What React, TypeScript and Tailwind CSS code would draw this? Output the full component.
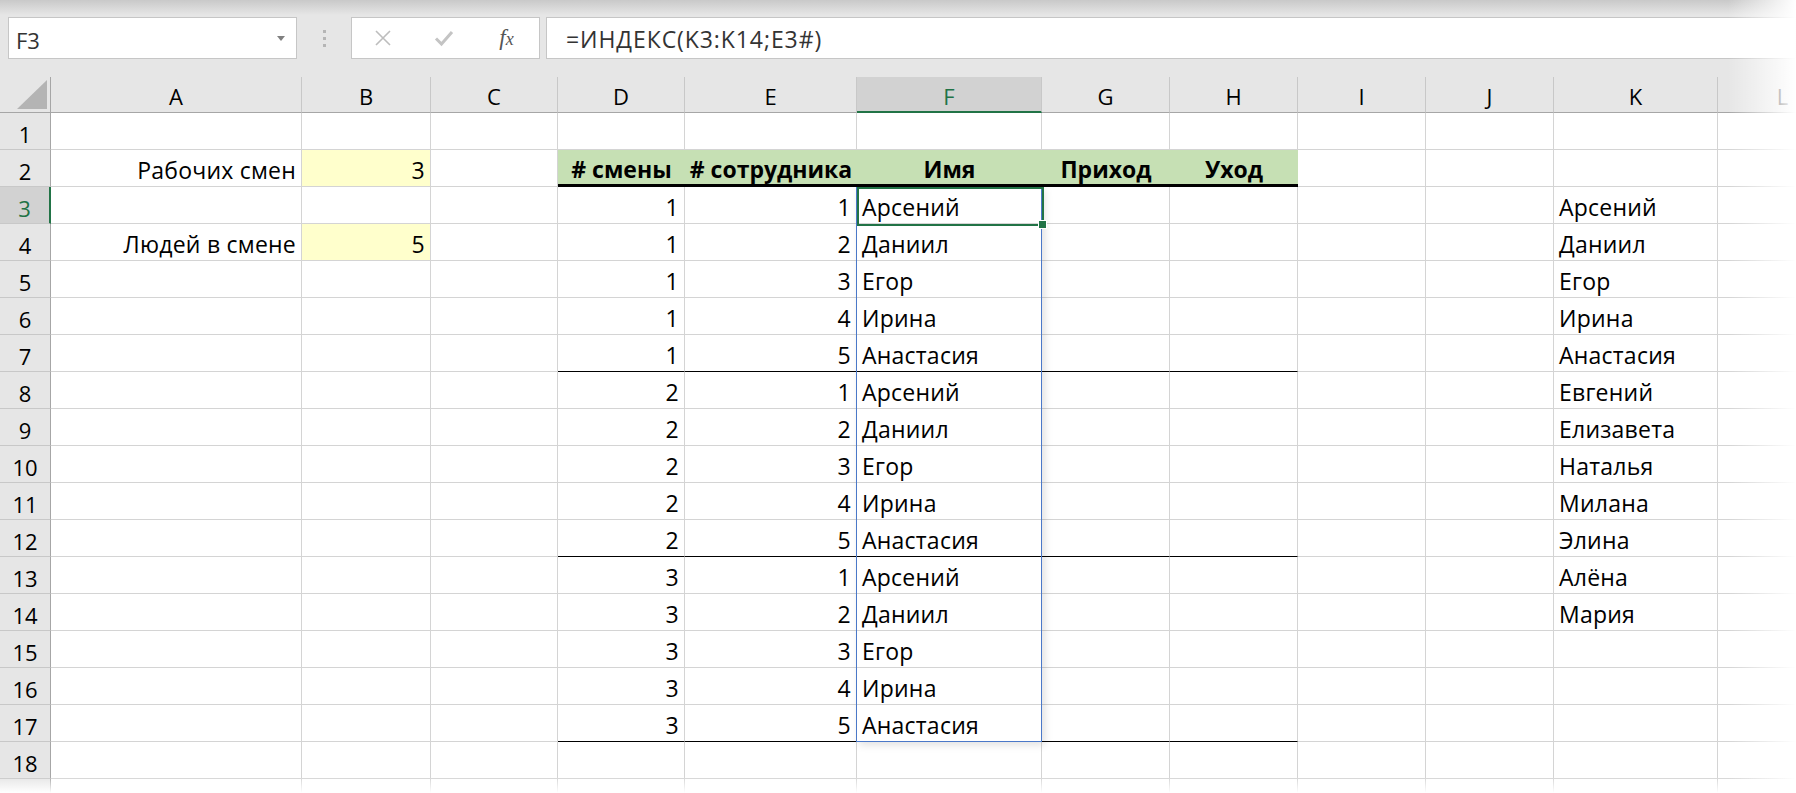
import React from "react";

const COLS = ["A", "B", "C", "D", "E", "F", "G", "H", "I", "J", "K", "L"];
const STAFF = ["Арсений", "Даниил", "Егор", "Ирина", "Анастасия"];
const LIST = [
  "Арсений",
  "Даниил",
  "Егор",
  "Ирина",
  "Анастасия",
  "Евгений",
  "Елизавета",
  "Наталья",
  "Милана",
  "Элина",
  "Алёна",
  "Мария",
];
const HEADERS = ["# смены", "# сотрудника", "Имя", "Приход", "Уход"];
const ROWS = Array.from({ length: 19 }, (_, i) => i + 1);

type Align = "left" | "right" | "center";

function cellValue(r: number, c: number): { text: string; align: Align; bold?: boolean } {
  if (r === 2 && c === 0) return { text: "Рабочих смен", align: "right" };
  if (r === 2 && c === 1) return { text: "3", align: "right" };
  if (r === 4 && c === 0) return { text: "Людей в смене", align: "right" };
  if (r === 4 && c === 1) return { text: "5", align: "right" };
  if (r === 2 && c >= 3 && c <= 7) return { text: HEADERS[c - 3], align: "center", bold: true };
  if (r >= 3 && r <= 17) {
    const i = r - 3;
    if (c === 3) return { text: String(Math.floor(i / 5) + 1), align: "right" };
    if (c === 4) return { text: String((i % 5) + 1), align: "right" };
    if (c === 5) return { text: STAFF[i % 5], align: "left" };
  }
  if (c === 10 && r >= 3 && r <= 14) return { text: LIST[r - 3], align: "left" };
  return { text: "", align: "left" };
}

function Cell({ r, c }: { r: number; c: number }) {
  const inTable = c >= 3 && c <= 7;
  const head = r === 2 && inTable;
  const groupEnd = inTable && (r === 7 || r === 12 || r === 17);
  const yellow = (r === 2 || r === 4) && c === 1;
  const v = cellValue(r, c);

  const bottom = head
    ? "border-b-[3px] border-b-black"
    : groupEnd
    ? "border-b border-b-black"
    : "border-b border-b-[#d4d4d4]";
  const right = head ? "" : "border-r border-r-[#d4d4d4]";
  const bg = head ? "bg-[#c6e0b4]" : yellow ? "bg-[#ffffcc]" : "bg-white";
  const justify =
    v.align === "right" ? "justify-end" : v.align === "center" ? "justify-center" : "justify-start";

  return (
    <div
      className={`flex items-center overflow-hidden whitespace-nowrap px-[5px] pt-[5px] text-[23px] leading-none text-black ${bottom} ${right} ${bg} ${justify} ${
        v.bold ? "font-bold" : "tracking-[0.01em]"
      }`}
    >
      {v.text}
    </div>
  );
}

function Toolbar() {
  return (
    <div className="flex h-[77px] items-start bg-[linear-gradient(to_bottom,#c9c9c9_0px,#e6e6e6_15px)] pt-[17px]">
      <div className="ml-[8px] flex h-[42px] w-[289px] items-center border border-[#c6c6c6] bg-white pl-[7px] pr-[11px] pt-[3px]">
        <span className="flex-1 text-[22px] leading-none text-[#333]">F3</span>
        <svg width="8" height="5" viewBox="0 0 8 5" className="mb-[3px]">
          <path d="M0 0h8L4 5z" fill="#808080" />
        </svg>
      </div>
      <div className="flex h-[42px] w-[54px] flex-col items-center justify-center gap-[4px]">
        <span className="h-[3px] w-[3px] bg-[#b5b5b5]" />
        <span className="h-[3px] w-[3px] bg-[#b5b5b5]" />
        <span className="h-[3px] w-[3px] bg-[#b5b5b5]" />
      </div>
      <div className="flex h-[42px] w-[189px] items-center border border-[#c6c6c6] bg-white">
        <div className="flex w-[62px] justify-center">
          <svg width="18" height="18" viewBox="0 0 18 18">
            <path d="M2 2L16 16M16 2L2 16" stroke="#bdbdbd" strokeWidth="1.6" />
          </svg>
        </div>
        <div className="flex w-[60px] justify-center">
          <svg width="20" height="18" viewBox="0 0 20 18">
            <path d="M2 9.5L7.5 15L18 3" stroke="#c4c4c4" strokeWidth="3" fill="none" />
          </svg>
        </div>
        <div className="flex-1 pb-[2px] text-center font-['Liberation_Serif',serif] text-[23px] italic leading-none text-[#555]">
          <span>f</span>
          <span className="text-[18px]">x</span>
        </div>
      </div>
      <div className="ml-[6px] flex h-[42px] flex-1 items-center border border-[#c6c6c6] bg-white pl-[19px] pt-[3px] text-[23px] leading-none tracking-[0.04em] text-[#333]">
        =ИНДЕКС(K3:K14;E3#)
      </div>
    </div>
  );
}

export default function App() {
  return (
    <div className="relative h-[793px] w-[1796px] overflow-hidden bg-white font-['Open_Sans',sans-serif]">
      <Toolbar />
      <div className="relative grid grid-cols-[51px_251px_129px_127px_127px_172px_185px_128px_128px_128px_128px_164px_130px] grid-rows-[36px_repeat(19,37px)]">
        {/* corner */}
        <div className="relative border-b border-r border-b-[#a6a6a6] border-r-[#a6a6a6] bg-[#e6e6e6]">
          <svg width="30" height="29" viewBox="0 0 30 29" className="absolute bottom-[3px] right-[3px]">
            <path d="M30 0V29H0z" fill="#b4b4b4" />
          </svg>
        </div>
        {COLS.map((col) =>
          col === "F" ? (
            <div
              key={col}
              className="flex items-center justify-center border-b-2 border-r border-b-[#217346] border-r-[#c8c8c8] bg-[#d2d2d2] pt-[3px] text-[22px] leading-none text-[#217346]"
            >
              {col}
            </div>
          ) : (
            <div
              key={col}
              className="flex items-center justify-center border-b border-r border-b-[#a6a6a6] border-r-[#c8c8c8] bg-[#e6e6e6] pt-[3px] text-[22px] leading-none text-black"
            >
              {col}
            </div>
          )
        )}
        {ROWS.map((r) => (
          <React.Fragment key={r}>
            {r === 3 ? (
              <div className="flex items-center justify-center border-b border-r-2 border-b-[#c8c8c8] border-r-[#217346] bg-[#d2d2d2] pt-[5px] text-[22px] leading-none text-[#217346]">
                {r}
              </div>
            ) : (
              <div className="flex items-center justify-center border-b border-r border-b-[#c8c8c8] border-r-[#a6a6a6] bg-[#e6e6e6] pt-[5px] text-[22px] leading-none text-black">
                {r < 19 ? r : ""}
              </div>
            )}
            {COLS.map((_, c) => (
              <Cell key={c} r={r} c={c} />
            ))}
          </React.Fragment>
        ))}

        {/* spill range F3:F17 */}
        <div className="pointer-events-none absolute bottom-0 left-[-1px] right-0 top-0 col-[7/8] row-[4/19] border border-[#4a78c8] shadow-[3px_3px_8px_rgba(0,0,0,0.12)]" />
        {/* active cell F3 */}
        <div className="pointer-events-none absolute bottom-[-2px] left-0 right-[-2px] top-0 col-[7/8] row-[4/5] border-2 border-[#217346]">
          <span className="absolute bottom-[-5px] right-[-5px] h-[9px] w-[9px] border border-white bg-[#217346]" />
        </div>
      </div>

      {/* edge fades */}
      <div className="pointer-events-none absolute right-0 top-0 h-full w-[68px] bg-linear-to-r from-white/0 to-white" />
      <div className="pointer-events-none absolute bottom-0 left-0 h-[16px] w-full bg-linear-to-b from-white/0 to-white" />
    </div>
  );
}
